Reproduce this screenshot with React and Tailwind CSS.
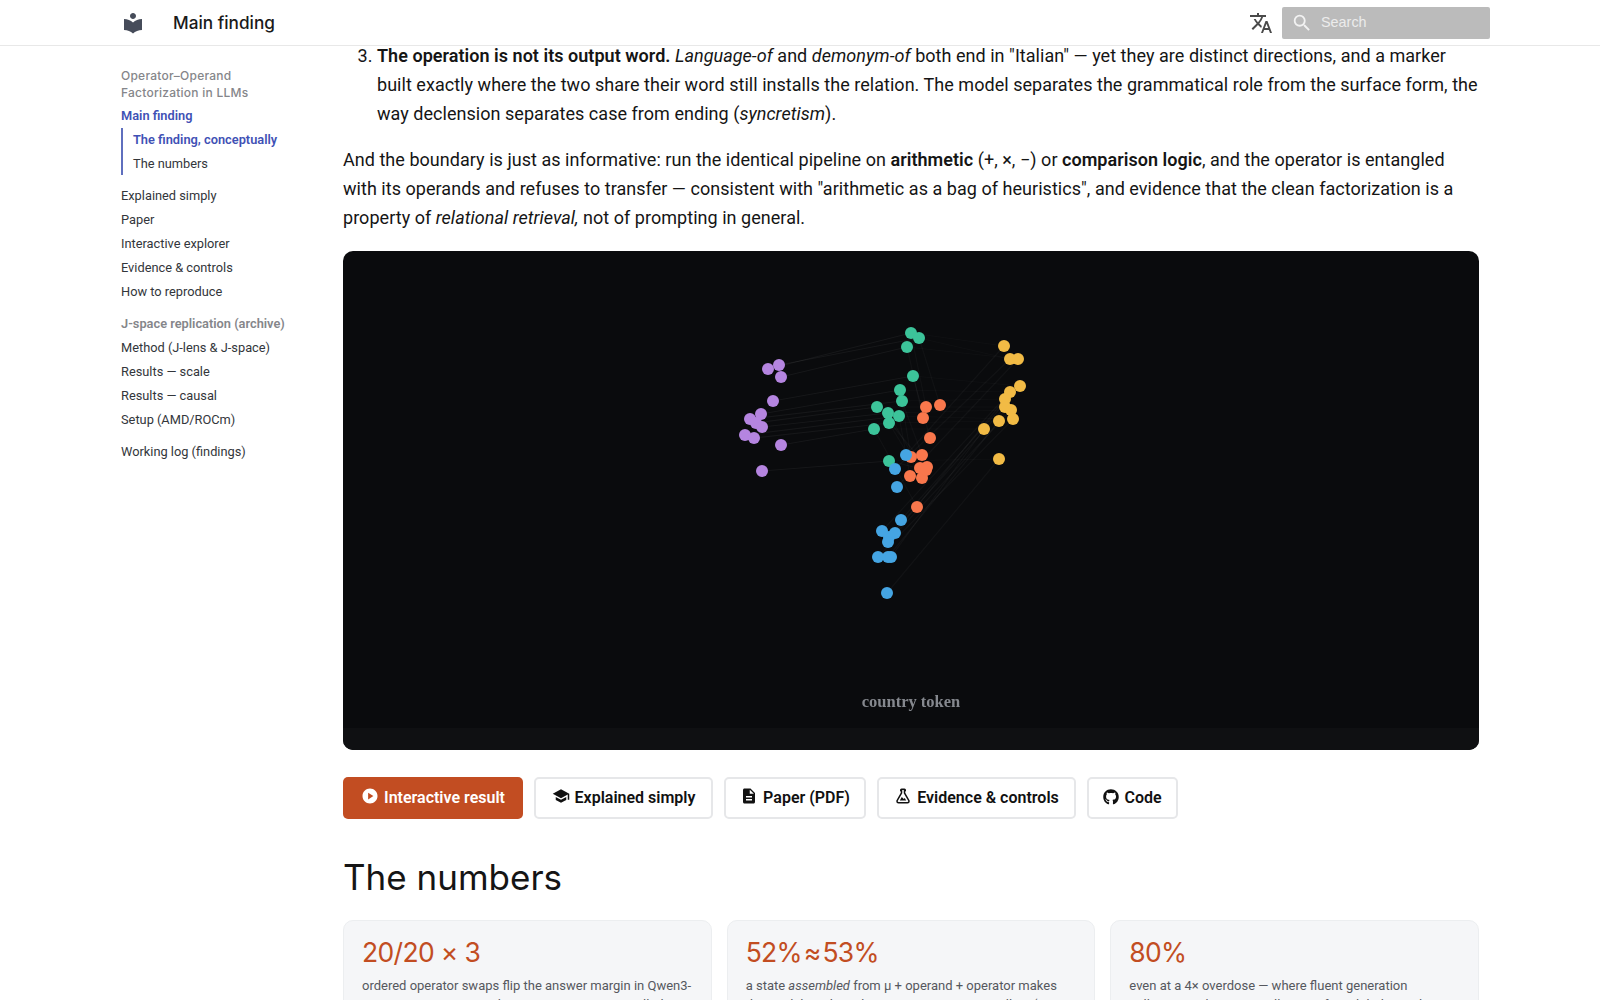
import { MdLocalLibrary, MdTranslate, MdSearch, MdPlayCircle, MdSchool, MdDescription } from 'react-icons/md';
import { FaGithub } from 'react-icons/fa';

const nav = [
  { label: 'Explained simply', cls: 'mt-[9px]' },
  { label: 'Paper' },
  { label: 'Interactive explorer' },
  { label: 'Evidence & controls' },
  { label: 'How to reproduce' },
];
const nav2 = ['Method (J-lens & J-space)', 'Results — scale', 'Results — causal', 'Setup (AMD/ROCm)'];

const purple = [[768, 369], [779, 365], [781, 377], [773, 401], [761, 414], [750, 419], [756, 423], [762, 427], [745, 435], [754, 438], [781, 445], [762, 471]];
const green = [[911, 333], [919, 338], [907, 347], [913, 376], [900, 390], [902, 401], [877, 407], [888, 413], [899, 416], [889, 423], [874, 429], [889, 461]];
const yellow = [[1004, 346], [1010, 359], [1018, 359], [1020, 386], [1010, 392], [1005, 399], [1005, 407], [1011, 410], [1013, 419], [999, 421], [984, 429], [999, 459]];
const orange = [[926, 407], [940, 405], [923, 418], [930, 438], [911, 457], [922, 455], [927, 467], [920, 468], [910, 476], [922, 478], [917, 507], [926, 470]];
const blue = [[906, 455], [895, 469], [897, 487], [901, 520], [882, 531], [895, 533], [889, 537], [888, 542], [878, 557], [888, 557], [891, 557], [887, 593]];

function Dots({ pts, color }) {
  return pts.map((p, i) => <circle key={i} cx={p[0]} cy={p[1]} r="6" fill={color} />);
}

function Lines({ a, b, o = 0.05 }) {
  return a.map((p, i) => (
    <line key={i} x1={p[0]} y1={p[1]} x2={b[i][0]} y2={b[i][1]} stroke="#fff" strokeOpacity={o} strokeWidth="1.2" />
  ));
}

function Chart() {
  return (
    <svg viewBox="343 251 1136 499" className="block w-full h-full">
      <rect x="343" y="728" width="1136" height="22" fill="#0f1012" />
      <g className="blur-[0.4px]">
        <Lines a={purple} b={green} />
        <Lines a={green} b={yellow} o={0.025} />
        <Lines a={blue} b={yellow} o={0.035} />
        <Lines a={green} b={orange} o={0.03} />
        <Dots pts={purple} color="#b585e0" />
        <Dots pts={yellow} color="#f2bb45" />
        <Dots pts={orange} color="#f9774c" />
        <Dots pts={green} color="#3cc49a" />
        <Dots pts={blue} color="#45a5e3" />
      </g>
      <text x="911" y="707" textAnchor="middle" fontFamily="'Liberation Serif', serif" fontWeight="700" fontSize="16.5" fill="#85888e" className="blur-[0.3px]">country token</text>
    </svg>
  );
}

function FlaskIcon({ className }) {
  return (
    <svg viewBox="0 0 24 24" fill="currentColor" className={className}>
      <path d="M5,19A1,1 0 0,0 6,20H18A1,1 0 0,0 19,19C19,18.79 18.93,18.59 18.82,18.43L13,8.35V4H11V8.35L5.18,18.43C5.07,18.59 5,18.79 5,19M6,22A3,3 0 0,1 3,19C3,18.4 3.18,17.84 3.5,17.37L9,7.81V6A1,1 0 0,1 8,5V4A2,2 0 0,1 10,2H14A2,2 0 0,1 16,4V5A1,1 0 0,1 15,6V7.81L20.5,17.37C20.82,17.84 21,18.4 21,19A3,3 0 0,1 18,22H6M13,16L14.34,14.66L16.27,18H7.73L10.39,13.39L13,16Z" />
    </svg>
  );
}

function Btn({ icon, primary, width, children }) {
  return (
    <a className={width + ' ' + (primary
      ? 'flex items-center justify-center gap-[5px] h-[42px] pt-[2px] rounded-[5px] bg-[#c24d22] text-white font-semibold text-[16px]'
      : 'flex items-center justify-center gap-[5px] h-[42px] pt-[2px] rounded-[5px] bg-white border-2 border-[#e6e7e9] text-[#111] font-semibold text-[16px]')}>
      {icon}
      {children}
    </a>
  );
}

function Stat({ value, tight, children }) {
  return (
    <div className="bg-[#f5f6f8] border border-[#eceef0] rounded-[10px] px-[18px] pt-[13px] pb-4">
      <div className={(tight ? '[word-spacing:-5px] ' : '') + "text-[#c24d22] text-[26.5px] leading-[36px] font-['Inter',sans-serif] tracking-[-0.025em]"}>{value}</div>
      <p className="mt-[6px] text-[13px] leading-[19px] text-[#55585e]">{children}</p>
    </div>
  );
}

export default function App() {
  return (
    <div className="h-screen overflow-hidden bg-white text-[#151515] font-['Roboto',sans-serif]">
      <header className="fixed top-0 inset-x-0 z-10 h-[46px] bg-white border-b border-[#e8e8e8] flex items-center pl-[121px] pr-[110px]">
        <MdLocalLibrary className="text-[#464c5a] w-[24px] h-[24px]" />
        <div className="ml-[28px] text-[17.2px] font-medium font-['Inter',sans-serif] text-[#1a1a1a]">Main finding</div>
        <MdTranslate className="ml-auto text-[#4a4a4a] w-[24px] h-[24px]" />
        <div className="ml-[9px] w-[208px] h-[32px] rounded-[2px] bg-[#bbbbbb] flex items-center pl-[9px] gap-[8px] text-white">
          <MdSearch className="w-[22px] h-[22px] text-[#f2f2f2]" />
          <span className="text-[14.4px] text-[#ececec] font-['Liberation_Sans',sans-serif]">Search</span>
        </div>
      </header>

      <div className="flex pl-[121px] pt-[42px]">
        <aside className="w-[222px] shrink-0 pt-[26px] text-[12.8px] text-[#33363b]">
          <div className="w-[165px] text-[12px] leading-[16.5px] font-medium text-[#85868a] font-['Inter',sans-serif] tracking-[0.02em]">Operator–Operand Factorization in LLMs</div>
          <div className="mt-[3px] leading-[24px] font-semibold text-[#3f51b5]">Main finding</div>
          <div className="border-l-2 border-[#5f6fbe] pl-[10px]">
            <div className="leading-[24px] font-semibold text-[#3f51b5]">The finding, conceptually</div>
            <div className="leading-[23px]">The numbers</div>
          </div>
          {nav.map((n) => (
            <div key={n.label} className={'leading-[24px] ' + (n.cls || '')}>{n.label}</div>
          ))}
          <div className="mt-[8px] leading-[24px] font-semibold text-[#85868a]">J-space replication (archive)</div>
          {nav2.map((n) => (
            <div key={n} className="leading-[24px]">{n}</div>
          ))}
          <div className="mt-[8px] leading-[24px]">Working log (findings)</div>
        </aside>

        <main className="w-[1136px] text-[18px] leading-[28.8px]">
          <ol className="list-decimal pl-[34px] marker:text-[#151515] tracking-[0.002em]" start={3}>
            <li>
              <b className="font-semibold">The operation is not its output word.</b> <i>Language-of</i> and <i>demonym-of</i> both end in "Italian" — yet they are distinct directions, and a marker built exactly where the two share their word still installs the relation. The model separates the grammatical role from the surface form, the way declension separates case from ending (<i>syncretism</i>).
            </li>
          </ol>
          <p className="mt-[18px] tracking-[0.002em]">
            And the boundary is just as informative: run the identical pipeline on <b className="font-semibold">arithmetic</b> (+, ×, −) or <b className="font-semibold">comparison logic</b>, and the operator is entangled with its operands and refuses to transfer — consistent with "arithmetic as a bag of heuristics", and evidence that the clean factorization is a property of <i>relational retrieval,</i> not of prompting in general.
          </p>

          <div className="mt-[18px] h-[499px] rounded-[10px] overflow-hidden bg-[#0a0b0d]">
            <Chart />
          </div>

          <div className="mt-[27px] flex gap-[11px]">
            <Btn primary width="w-[180px]" icon={<MdPlayCircle className="w-[18px] h-[18px] -mt-[5px]" />}>Interactive result</Btn>
            <Btn width="w-[179px]" icon={<MdSchool className="w-[18px] h-[18px] -mt-[5px]" />}>Explained simply</Btn>
            <Btn width="w-[142px]" icon={<MdDescription className="w-[18px] h-[18px] -mt-[5px]" />}>Paper (PDF)</Btn>
            <Btn width="w-[199px]" icon={<FlaskIcon className="w-[18px] h-[18px] -mt-[5px]" />}>Evidence & controls</Btn>
            <Btn width="w-[91px]" icon={<FaGithub className="w-[16px] h-[16px] -mt-[4px]" />}>Code</Btn>
          </div>

          <h2 className="mt-[34px] text-[35px] leading-[48px] font-normal font-['Inter',sans-serif] text-[#151515]">The numbers</h2>

          <div className="mt-[19px] grid grid-cols-3 gap-[15px]">
            <Stat value="20/20 × 3">ordered operator swaps flip the answer margin in Qwen3-4.7B, Gemma 2 27B and Gemma 2 9B — a controlled label-null</Stat>
            <Stat tight value="52% ≈ 53%">a state <i>assembled</i> from µ + operand + operator makes the model produce the same quantity as recalling (97–100%)</Stat>
            <Stat value="80%">even at a 4× overdose — where fluent generation collapses — the target still wins a few-global-signal</Stat>
          </div>
        </main>
      </div>
    </div>
  );
}
